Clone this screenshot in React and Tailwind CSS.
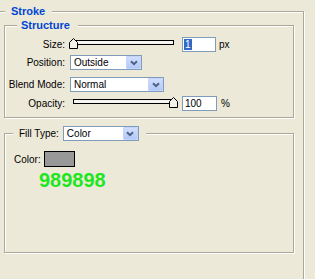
const etched =
  "border border-[#ACA899] shadow-[inset_1px_1px_0_#ffffff,1px_1px_0_#ffffff]";

function Chevron() {
  return (
    <svg width="8" height="6" viewBox="0 0 8 6">
      <path d="M1 1.2 L4 4.2 L7 1.2" fill="none" stroke="#4D6185" strokeWidth="2" />
    </svg>
  );
}

function Select({ width, text }) {
  return (
    <div className={`flex h-[15px] items-stretch border border-[#7F9DB9] bg-white ${width}`}>
      <span className="flex-1 pl-[3px] leading-[13px]">{text}</span>
      <div className="flex w-[15px] items-center justify-center rounded-[1px] border border-[#C3D3FD] bg-gradient-to-b from-[#D2DEFE] to-[#B4C8F6]">
        <Chevron />
      </div>
    </div>
  );
}

function Thumb({ className }) {
  return (
    <svg className={`absolute top-[1px] ${className}`} width="9" height="11" viewBox="0 0 9 11">
      <polygon points="4.5,0.5 8.5,4.5 8.5,10.5 0.5,10.5 0.5,4.5" fill="#F3F2EA" stroke="#000" strokeWidth="1" />
    </svg>
  );
}

function Slider({ thumbRight }) {
  return (
    <div className="relative ml-[5px] h-[15px] w-[108px]">
      <div className="ml-[3px] mt-[3px] h-[5px] w-[101px] border border-black bg-[#F6F5EF]" />
      <Thumb className={thumbRight ? "left-[99px]" : "left-[-1px]"} />
    </div>
  );
}

function Label({ children }) {
  return <span className="w-[60px] text-right">{children}</span>;
}

export default function App() {
  return (
    <div className="h-[279px] w-[315px] overflow-hidden bg-[#ECE9D8] font-['Liberation_Sans',Arial,sans-serif] text-[10px] text-black">
      <fieldset className={`ml-[-2px] mt-[5px] h-[300px] w-[306px] pl-[5px] pr-[9px] ${etched}`}>
        <legend className="ml-[1px] h-[13px] bg-[#ECE9D8] pl-[6px] pr-[7px] text-[11px] font-bold leading-[13px] text-[#0046D5]">
          Stroke
        </legend>

        <fieldset className={`mt-[1px] w-[290px] pb-[6px] ${etched}`}>
          <legend className="ml-[12px] h-[13px] bg-[#ECE9D8] pl-[4px] pr-[8px] text-[11px] font-bold leading-[13px] text-[#0046D5]">
            Structure
          </legend>

          <div className="mt-[5px] flex h-[15px] items-center">
            <Label>Size:</Label>
            <Slider />
            <div className="ml-[4px] flex h-[15px] w-[34px] items-center border border-[#7F9DB9] bg-white pl-[1px]">
              <span className="bg-[#316AC5] px-[1px] leading-[11px] text-white">1</span>
            </div>
            <span className="ml-[3px]">px</span>
          </div>

          <div className="mt-[3px] flex h-[15px] items-center">
            <Label>Position:</Label>
            <div className="ml-[5px]">
              <Select width="w-[72px]" text="Outside" />
            </div>
          </div>

          <div className="mt-[7px] flex h-[15px] items-center">
            <Label>Blend Mode:</Label>
            <div className="ml-[5px]">
              <Select width="w-[94px]" text="Normal" />
            </div>
          </div>

          <div className="mt-[4px] flex h-[15px] items-center">
            <Label>Opacity:</Label>
            <Slider thumbRight />
            <div className="ml-[4px] flex h-[15px] w-[35px] items-center border border-[#7F9DB9] bg-white pl-[2px]">
              100
            </div>
            <span className="ml-[4px]">%</span>
          </div>
        </fieldset>

        <fieldset className={`mt-[8px] h-[127px] w-[290px] ${etched}`}>
          <legend className="ml-[8px] flex h-[15px] items-center bg-[#ECE9D8] pl-[6px] pr-[7px]">
            <span>Fill Type:</span>
            <div className="ml-[4px]">
              <Select width="w-[76px]" text="Color" />
            </div>
          </legend>

          <div className="mt-[10px] flex h-[16px] items-center pl-[9px]">
            <span>Color:</span>
            <div className="ml-[3px] h-[16px] w-[31px] border border-black bg-[#989898]" />
          </div>
          <div className="mt-[3px] pl-[34px] text-[20px] font-bold leading-[20px] text-[#1EE61E]">
            989898
          </div>
        </fieldset>
      </fieldset>
    </div>
  );
}
